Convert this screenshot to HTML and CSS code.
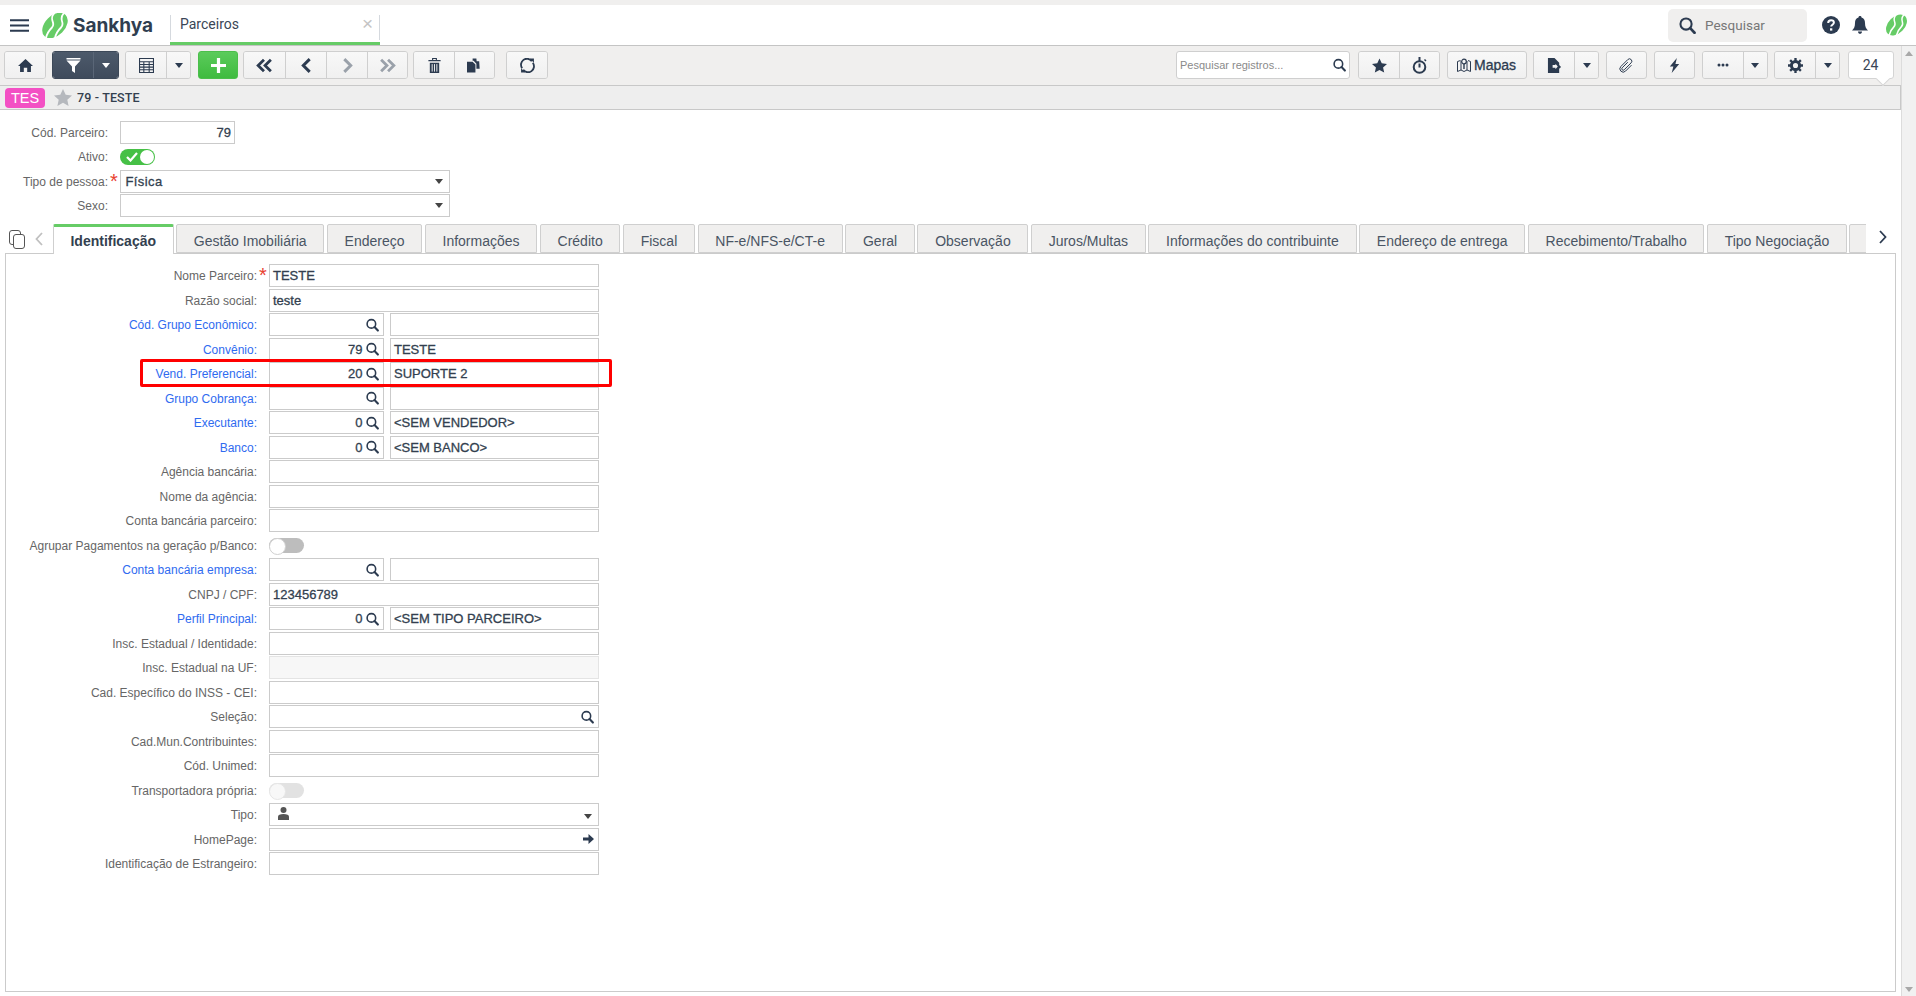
FILE: index.html
```html
<!DOCTYPE html>
<html lang="pt-BR">
<head>
<meta charset="utf-8">
<title>Parceiros - Sankhya</title>
<link rel="stylesheet" href="styles.css">
</head>
<body>
<svg class="sprite" width="0" height="0" aria-hidden="true">
  <symbol id="i-search" viewBox="0 0 14 14"><circle cx="5.8" cy="5.8" r="4.6" fill="none" stroke="currentColor" stroke-width="1.7"/><path d="M9.2 9.2l3.6 3.8" stroke="currentColor" stroke-width="2.2" stroke-linecap="round"/></symbol>
  <symbol id="i-logo" viewBox="0 0 28 25"><g transform="rotate(45 14 12.5)"><ellipse cx="14" cy="12.5" rx="10" ry="15" fill="#66cc66"/></g><path d="M13.500 0C7 7 15.500 9.500 11 14.500 8.500 17 6 20 5 25" fill="none" stroke="#fff" stroke-width="1.800"/><path d="M23 0C16.500 7 25 9.500 20 14.500 17.500 17 15 20 14 25" fill="none" stroke="#fff" stroke-width="1.800"/></symbol>
</svg>

<div class="topstrip"></div>
<header class="appbar">
  <svg class="burger" viewBox="0 0 19 13"><path d="M0 1.200h19M0 6.500h19M0 11.800h19" stroke="#2c3b50" stroke-width="2"/></svg>
  <svg class="logo"><use href="#i-logo"/></svg>
  <span class="brand">Sankhya</span>
  <div class="apptab"><span class="apptab-title">Parceiros</span><span class="apptab-close">×</span></div>
  <div class="appbar-right">
    <div class="global-search"><svg class="gs-icon"><use href="#i-search"/></svg><span>Pesquisar</span></div>
    <svg class="help" viewBox="0 0 18 18"><circle cx="9" cy="9" r="9" fill="#2c3b50"/><path d="M6.200 6.900c0-1.700 1.300-2.700 2.900-2.700 1.700 0 2.800 1 2.800 2.400 0 2.200-2.700 2.100-2.700 4" fill="none" stroke="#fff" stroke-width="2"/><rect x="8" y="12.300" width="2.300" height="2.300" fill="#fff"/></svg>
    <svg class="bell" viewBox="0 0 16 18"><path d="M8 0c1 0 1.500.6 1.500 1.400C12 2 13 4 13 7c0 4 1 5.500 3 7.500H0C2 12.500 3 11 3 7c0-3 1-5 3.500-5.600C6.500.6 7 0 8 0z" fill="#2c3b50"/><path d="M6 15.500h4c0 1.500-1 2.300-2 2.300s-2-.8-2-2.300z" fill="#2c3b50"/></svg>
    <svg class="logo-small"><use href="#i-logo"/></svg>
  </div>
</header>

<div class="workspace">
  <div class="content">
    <div class="toolbar">
      <div class="grp"><button class="btn w40"><svg class="ico" viewBox="0 0 16 14"><path d="M8 0L0 7.500h2.200V14h4v-4.500h3.600V14h4V7.500H16z" fill="#2c3b50"/></svg></button></div>
      <div class="grp dark g6"><button class="btn w40"><svg class="ico" viewBox="0 0 14 15"><path d="M0 0h14v1.500H0zM0 2.500h14L8.500 8.500V15l-3-2V8.500z" fill="#fff"/></svg></button><button class="btn w25"><i class="caret white"></i></button></div>
      <div class="grp g6"><button class="btn w40"><svg class="ico" viewBox="0 0 14 14"><path d="M.5.500h13v13H.5zM.5 3.500h13M.5 6h13M.5 8.500h13M.5 11h13M4.500 3.500v10M9.500 3.500v10" fill="none" stroke="#2c3b50"/></svg></button><button class="btn w24"><i class="caret"></i></button></div>
      <button class="btn add w40 g7"><svg class="ico" viewBox="0 0 14 14"><path d="M5.500 0h3v5.500H14v3H8.500V14h-3V8.500H0v-3h5.500z" fill="#fff"/></svg></button>
      <div class="grp ml5">
        <button class="btn w41"><svg class="ico big" viewBox="0 0 16 14"><path d="M7.500 1.500L2 7l5.500 5.500M14 1.500L8.500 7l5.500 5.500" fill="none" stroke="#2c3b50" stroke-width="2.600"/></svg></button>
        <button class="btn w41"><svg class="ico big" viewBox="0 0 16 14"><path d="M11 1L5 7l6 6" fill="none" stroke="#2c3b50" stroke-width="2.800"/></svg></button>
        <button class="btn w41"><svg class="ico big" viewBox="0 0 16 14"><path d="M5 1l6 6-6 6" fill="none" stroke="#9aa1aa" stroke-width="2.800"/></svg></button>
        <button class="btn w40"><svg class="ico big" viewBox="0 0 16 14"><path d="M2 1.500L7.500 7 2 12.500M8.500 1.500L14 7l-5.500 5.500" fill="none" stroke="#9aa1aa" stroke-width="2.600"/></svg></button>
      </div>
      <div class="grp ml5">
        <button class="btn w40"><svg class="ico" viewBox="0 0 13 16"><path d="M4.500 2.500V.5h4v2" fill="none" stroke="#2c3b50" stroke-width="1.200"/><path d="M0 2h13v1.500H0zM1.500 5h10v11h-10z" fill="#2c3b50"/><path d="M4 6.500v8M6.500 6.500v8M9 6.500v8" stroke="#f3f3f3"/></svg></button>
        <button class="btn w40"><svg class="ico" viewBox="0 0 16 15"><path d="M0 3.500h6L9 6.500V15H0z" fill="#2c3b50"/><path d="M6 0h4l.3 3 2.700 0 .5 8H10V5.500L7 2.500H6z" fill="#2c3b50"/></svg></button>
      </div>
      <div class="grp ml11"><button class="btn w40"><svg class="ico" viewBox="0 0 14 14"><path d="M2 9.500A5.500 5.500 0 0 1 11 3M12 4.500A5.500 5.500 0 0 1 3 11" fill="none" stroke="#2c3b50" stroke-width="1.700"/><path d="M9 .5h4v4zM5 13.500H1v-4z" fill="#2c3b50"/></svg></button></div>

      <div class="toolbar-right">
        <div class="rec-search"><span>Pesquisar registros...</span><svg class="ico-search"><use href="#i-search"/></svg></div>
        <div class="grp ml8">
          <button class="btn w40"><svg class="ico" viewBox="0 0 16 15"><path d="M8 0l2.400 5.200 5.600.6-4.200 3.800 1.200 5.400L8 12.200 3 15l1.200-5.400L0 5.800l5.600-.6z" fill="#2c3b50"/></svg></button>
          <button class="btn w40"><svg class="ico tall" viewBox="0 0 14 17"><circle cx="7" cy="10" r="5.800" fill="none" stroke="#2c3b50" stroke-width="2"/><path d="M7 0v4M7 6.500v4" stroke="#2c3b50" stroke-width="2"/><path d="M12 2.500l1.500 1.500" stroke="#2c3b50" stroke-width="1.500"/></svg></button>
        </div>
        <button class="btn maps ml6"><svg class="map-ico" viewBox="0 0 14 14"><path d="M.5 3.500v10l3.500-1.500 3 1.500 3-1.500 3.500 1.500v-10l-2.500-1M4 3v9M10 3v9M3.500 2.500L.5 3.500" fill="none" stroke="#2c3b50" stroke-width="1"/><circle cx="7" cy="3.500" r="2.300" fill="none" stroke="#2c3b50" stroke-width="1.200"/><path d="M7 6v5" stroke="#2c3b50" stroke-width="1.400"/></svg><span>Mapas</span></button>
        <div class="grp ml6"><button class="btn w40"><svg class="ico" viewBox="0 0 14 16"><path d="M0 0h7l5 5v2.500l2 2-2 2V16H0z" fill="#2c3b50"/><path d="M8 6v1.500h-3v3h3V12l2.500-3z" fill="#f3f3f3"/></svg></button><button class="btn w24"><i class="caret"></i></button></div>
        <button class="btn w41 ml6"><svg class="ico" viewBox="0 0 16 16"><g transform="rotate(45 8 8)"><path d="M6.500 4.500v8.500a1.500 1.500 0 0 0 3 0V2.500a2.500 2.500 0 0 0-5 0V13a3.500 3.500 0 0 0 7 0V4" fill="none" stroke="#2c3b50" stroke-width="1"/></g></svg></button>
        <button class="btn w41 ml7"><svg class="ico" viewBox="0 0 10 16"><path d="M7.500 0L0 9h3.800L2 16l8-9.500H6z" fill="#2c3b50"/></svg></button>
        <div class="grp ml6"><button class="btn w40"><svg class="dots" viewBox="0 0 12 4"><circle cx="2" cy="2" r="1.500" fill="#2c3b50"/><circle cx="6" cy="2" r="1.500" fill="#2c3b50"/><circle cx="10" cy="2" r="1.500" fill="#2c3b50"/></svg></button><button class="btn w24"><i class="caret"></i></button></div>
        <div class="grp ml6"><button class="btn w40"><svg class="ico" viewBox="0 0 14 14"><circle cx="7" cy="7" r="3.800" fill="none" stroke="#2c3b50" stroke-width="2.800"/><path d="M7 0v3M7 11v3M0 7h3M11 7h3M2 2l2 2M10 10l2 2M12 2l-2 2M4 10l-2 2" stroke="#2c3b50" stroke-width="2.200"/></svg></button><button class="btn w24"><i class="caret"></i></button></div>
        <div class="page-size ml7">24</div>
      </div>
    </div>

    <div class="titlebar"><span class="badge">TES</span><svg class="fav" viewBox="0 0 18 17"><path d="M9 0l2.700 5.800 6.300.7-4.700 4.300L14.600 17 9 13.800 3.400 17l1.300-6.200L0 6.500l6.300-.7z" fill="#b5b8bd"/></svg><span class="title-text">79 - TESTE</span></div>

    <form class="headform">
      <div class="row"><label class="lbl-h">Cód. Parceiro:</label><span class="req"></span><div class="field code">79</div></div>
      <div class="row"><label class="lbl-h">Ativo:</label><span class="req"></span><span class="switch on"><svg class="check" viewBox="0 0 12 10"><path d="M1 5l3.500 3.500L11 1" fill="none" stroke="#fff" stroke-width="2.200"/></svg></span></div>
      <div class="row"><label class="lbl-h">Tipo de pessoa:</label><span class="req">*</span><div class="field select hselect"><span>Física</span><i class="caret sel"></i></div></div>
      <div class="row"><label class="lbl-h">Sexo:</label><span class="req"></span><div class="field select hselect"><span></span><i class="caret sel"></i></div></div>
    </form>

    <div class="tabline">
      <svg class="copy" viewBox="0 0 16 19"><rect x=".5" y=".5" width="11" height="14" rx="2.500" fill="none" stroke="#555"/><rect x="4.500" y="4.500" width="11" height="14" rx="2.500" fill="#fff" stroke="#555"/></svg>
      <svg class="tab-prev" viewBox="0 0 8 14"><path d="M7 1L1.500 7 7 13" fill="none" stroke="#c0c0c0" stroke-width="1.800"/></svg>
      <div class="tabs">
        <div class="tab active">Identificação</div>
        <div class="tab">Gestão Imobiliária</div>
        <div class="tab">Endereço</div>
        <div class="tab">Informações</div>
        <div class="tab">Crédito</div>
        <div class="tab">Fiscal</div>
        <div class="tab">NF-e/NFS-e/CT-e</div>
        <div class="tab">Geral</div>
        <div class="tab">Observação</div>
        <div class="tab">Juros/Multas</div>
        <div class="tab">Informações do contribuinte</div>
        <div class="tab">Endereço de entrega</div>
        <div class="tab">Recebimento/Trabalho</div>
        <div class="tab">Tipo Negociação</div>
        <div class="tab tab-more"></div>
      </div>
      <svg class="tab-next" viewBox="0 0 8 14"><path d="M1 1l5.500 6L1 13" fill="none" stroke="#2c3b50" stroke-width="1.800"/></svg>
    </div>

    <section class="panel">
      <div class="row"><label class="lbl">Nome Parceiro:</label><span class="req">*</span><div class="field wide">TESTE</div></div>
      <div class="row"><label class="lbl">Razão social:</label><span class="req"></span><div class="field wide">teste</div></div>
      <div class="row"><label class="lbl link">Cód. Grupo Econômico:</label><span class="req"></span><div class="field lookup"><svg class="ico-search"><use href="#i-search"/></svg></div><div class="field desc"></div></div>
      <div class="row"><label class="lbl link">Convênio:</label><span class="req"></span><div class="field lookup"><span>79</span><svg class="ico-search"><use href="#i-search"/></svg></div><div class="field desc">TESTE</div></div>
      <div class="row marked"><label class="lbl link">Vend. Preferencial:</label><span class="req"></span><div class="field lookup"><span>20</span><svg class="ico-search"><use href="#i-search"/></svg></div><div class="field desc">SUPORTE 2</div><span class="redbox"></span></div>
      <div class="row"><label class="lbl link">Grupo Cobrança:</label><span class="req"></span><div class="field lookup"><svg class="ico-search"><use href="#i-search"/></svg></div><div class="field desc"></div></div>
      <div class="row"><label class="lbl link">Executante:</label><span class="req"></span><div class="field lookup"><span>0</span><svg class="ico-search"><use href="#i-search"/></svg></div><div class="field desc">&lt;SEM VENDEDOR&gt;</div></div>
      <div class="row"><label class="lbl link">Banco:</label><span class="req"></span><div class="field lookup"><span>0</span><svg class="ico-search"><use href="#i-search"/></svg></div><div class="field desc">&lt;SEM BANCO&gt;</div></div>
      <div class="row"><label class="lbl">Agência bancária:</label><span class="req"></span><div class="field wide"></div></div>
      <div class="row"><label class="lbl">Nome da agência:</label><span class="req"></span><div class="field wide"></div></div>
      <div class="row"><label class="lbl">Conta bancária parceiro:</label><span class="req"></span><div class="field wide"></div></div>
      <div class="row"><label class="lbl">Agrupar Pagamentos na geração p/Banco:</label><span class="req"></span><span class="switch off"></span></div>
      <div class="row"><label class="lbl link">Conta bancária empresa:</label><span class="req"></span><div class="field lookup"><svg class="ico-search"><use href="#i-search"/></svg></div><div class="field desc"></div></div>
      <div class="row"><label class="lbl">CNPJ / CPF:</label><span class="req"></span><div class="field wide">123456789</div></div>
      <div class="row"><label class="lbl link">Perfil Principal:</label><span class="req"></span><div class="field lookup"><span>0</span><svg class="ico-search"><use href="#i-search"/></svg></div><div class="field desc">&lt;SEM TIPO PARCEIRO&gt;</div></div>
      <div class="row"><label class="lbl">Insc. Estadual / Identidade:</label><span class="req"></span><div class="field wide"></div></div>
      <div class="row"><label class="lbl">Insc. Estadual na UF:</label><span class="req"></span><div class="field wide disabled"></div></div>
      <div class="row"><label class="lbl">Cad. Específico do INSS - CEI:</label><span class="req"></span><div class="field wide"></div></div>
      <div class="row"><label class="lbl">Seleção:</label><span class="req"></span><div class="field wide trailing"><svg class="ico-search"><use href="#i-search"/></svg></div></div>
      <div class="row"><label class="lbl">Cad.Mun.Contribuintes:</label><span class="req"></span><div class="field wide"></div></div>
      <div class="row"><label class="lbl">Cód. Unimed:</label><span class="req"></span><div class="field wide"></div></div>
      <div class="row"><label class="lbl">Transportadora própria:</label><span class="req"></span><span class="switch off faded"></span></div>
      <div class="row"><label class="lbl">Tipo:</label><span class="req"></span><div class="field wide select"><svg class="person" viewBox="0 0 11 13"><circle cx="5.500" cy="3" r="3" fill="#555"/><path d="M0 13V9.500C0 8 2 7 5.500 7S11 8 11 9.500V13z" fill="#555"/></svg><i class="caret sel low"></i></div></div>
      <div class="row"><label class="lbl">HomePage:</label><span class="req"></span><div class="field wide trailing"><svg class="arrow" viewBox="0 0 11 10"><path d="M0 3.500h5.500V0L11 5 5.500 10V6.500H0z" fill="#2c3b50"/></svg></div></div>
      <div class="row"><label class="lbl">Identificação de Estrangeiro:</label><span class="req"></span><div class="field wide"></div></div>
    </section>
  </div>
  <aside class="scrollbar"><i class="sb-up"></i><i class="sb-down"></i></aside>
</div>
</body>
</html>
```

FILE: styles.css
```css
* { box-sizing: border-box; }
html, body { margin: 0; height: 100%; overflow: hidden; }
body {
  width: 1916px; height: 996px; display: flex; flex-direction: column;
  background: #fff; color: #2c3b50;
  font-family: "Liberation Sans", Arial, sans-serif; font-size: 13px;
}
.sprite { position: absolute; }
.topstrip { height: 5px; background: #f0efee; flex: none; }

/* app bar */
.appbar { height: 41px; flex: none; display: flex; align-items: center; border-bottom: 1px solid #c4c4c4; padding-left: 10px; }
.burger { width: 19px; height: 13px; flex: none; }
.logo { width: 28px; height: 25px; margin-left: 12px; flex: none; }
.brand { font-family: Inter, sans-serif; font-weight: 700; font-size: 19px; color: #2f3e50; margin-left: 4px; width: 97px; flex: none; }
.apptab { width: 210px; height: 40px; flex: none; display: flex; align-items: center; border-bottom: 3px solid #66cc66; position: relative; padding: 0 10px; justify-content: space-between; }
.apptab::before, .apptab::after { content: ""; position: absolute; top: 10px; height: 25px; width: 1px; background: #d5d9de; }
.apptab::before { left: 0; }
.apptab::after { right: 0; }
.apptab-title { font-family: Roboto, sans-serif; font-size: 14px; color: #3a4656; }
.apptab-close { font-size: 19px; color: #c4c4c4; margin-right: -3px; }
.appbar-right { margin-left: auto; display: flex; align-items: center; height: 100%; padding-right: 8px; }
.global-search { width: 139px; height: 33px; background: #f0efee; border-radius: 5px; display: flex; align-items: center; padding-left: 11px; gap: 9px; color: #777; font-family: Roboto, sans-serif; font-size: 13.500px; }
.gs-icon { width: 17px; height: 17px; color: #2c3b50; }
.help { width: 18px; height: 18px; margin-left: 15px; }
.bell { width: 16px; height: 18px; margin-left: 12px; }
.logo-small { width: 23px; height: 22px; margin-left: 17px; }

/* workspace */
.workspace { flex: 1; display: flex; min-height: 0; }
.content { width: 1901px; display: flex; flex-direction: column; }
.scrollbar { width: 15px; background: #f1f1f1; border-left: 1px solid #dcdcdc; position: relative; }
.sb-up, .sb-down { position: absolute; left: 3px; width: 0; height: 0; border-left: 4px solid transparent; border-right: 4px solid transparent; }
.sb-up { top: 5px; border-bottom: 5px solid #a8a8a8; }
.sb-down { bottom: 4px; border-top: 5px solid #a8a8a8; }

/* toolbar */
.toolbar { height: 39px; flex: none; background: #f0efee; display: flex; align-items: flex-start; padding: 5px 7.500px 0 4px; }
.toolbar-right { margin-left: auto; display: flex; align-items: flex-start; }
.grp { display: flex; height: 28px; border: 1px solid #cfcfcf; border-radius: 3px; overflow: hidden; flex: none; }
.btn { height: 28px; padding: 0; border: 0; display: flex; align-items: center; justify-content: center; background: linear-gradient(#f8f8f8, #f0f0f0); flex: none; cursor: pointer; color: #2c3b50; font-family: inherit; }
.grp .btn { height: 26px; }
.grp .btn + .btn { border-left: 1px solid #cfcfcf; }
.toolbar > .btn, .toolbar-right > .btn { border: 1px solid #cfcfcf; border-radius: 3px; }
.dark { border-color: #3c4858; }
.dark .btn { background: linear-gradient(#4d5a6b, #3f4b5c); }
.grp.dark .btn + .btn { border-left-color: #5a6677; }
.btn.add { background: linear-gradient(#5bcb5b, #3fbb3f); border-color: #4bbf4b; }
.w24 { width: 24px; } .w25 { width: 25px; } .w40 { width: 40px; } .w41 { width: 41px; }
.g6 { margin-left: 6px; } .g7 { margin-left: 7px; }
.ml5 { margin-left: 5px; } .ml6 { margin-left: 6.500px; } .ml7 { margin-left: 7.500px; } .ml8 { margin-left: 8px; } .ml11 { margin-left: 11px; }
.ico { width: 15px; height: 15px; }
.ico.big { width: 17px; }
.ico.tall { height: 17px; }
.dots { width: 12px; height: 4px; }
.caret { display: block; width: 0; height: 0; border-left: 4.500px solid transparent; border-right: 4.500px solid transparent; border-top: 5px solid #2c3b50; }
.caret.white { border-top-color: #fff; }
.rec-search { width: 174px; height: 28px; background: #fff; border: 1px solid #cfcfcf; border-radius: 3px; display: flex; align-items: center; justify-content: space-between; padding: 0 3px 0 3px; color: #8a8a8a; font-size: 11px; flex: none; }
.ico-search { width: 13px; height: 14px; color: #2c3b50; flex: none; }
.maps { width: 80px; gap: 3px; font-size: 14px; color: #2c3b50; -webkit-text-stroke: .3px #2c3b50; }
.map-ico { width: 14px; height: 14px; }
.page-size { width: 46px; height: 28px; background: #fff; border: 1px solid #d4d4d4; border-radius: 3px; display: flex; align-items: center; justify-content: center; font-family: Roboto, sans-serif; font-size: 14px; color: #3a4656; position: relative; flex: none; }
.page-size::after { content: ""; position: absolute; left: 29px; top: 22px; width: 9px; height: 9px; background: #fff; border-right: 1px solid #d4d4d4; border-bottom: 1px solid #d4d4d4; transform: rotate(45deg); }

/* title bar */
.titlebar { height: 25px; flex: none; background: #eee; border-top: 1px solid #c8c8c8; border-bottom: 1px solid #c8c8c8; border-right: 1px solid #c8c8c8; display: flex; align-items: center; padding-left: 5px; }
.badge { width: 40px; height: 20px; border-radius: 4px; background: #f350c4; color: #fff; font-size: 14.500px; display: flex; align-items: center; justify-content: center; }
.fav { width: 18px; height: 17px; margin-left: 9px; }
.title-text { font-family: Roboto, sans-serif; font-weight: 500; font-size: 12.500px; margin-left: 5px; letter-spacing: .15px; color: #333f4f; }

/* forms */
.headform { flex: none; padding-top: 10.500px; }
.row { display: flex; height: 24.500px; align-items: flex-start; position: relative; }
.lbl-h, .lbl { text-align: right; line-height: 25px; font-size: 12px; color: #666; flex: none; }
.lbl-h { width: 108px; }
.lbl { width: 251px; }
.link { color: #2f6bf0; }
.req { width: 12px; flex: none; color: #e8402f; font-size: 20px; line-height: 23px; padding-left: 2px; }
.lbl + .req { width: 11.500px; }
.field { height: 23px; flex: none; border: 1px solid #cbcbcb; background: #fff; padding: 0 3.500px; line-height: 21px; font-size: 13px; color: #333f4f; -webkit-text-stroke: .3px #333f4f; white-space: nowrap; }
.code { width: 115px; text-align: right; padding-right: 3px; }
.hselect { width: 330px; letter-spacing: .4px; padding-left: 4.500px; }
.select { display: flex; align-items: center; justify-content: space-between; }
.caret.sel { margin-right: 3px; border-top-color: #444; }
.wide .caret.sel { margin-right: 2px; }
.caret.low { margin-top: 3px; }
.wide { width: 330px; }
.lookup { width: 115px; display: flex; justify-content: flex-end; align-items: center; gap: 3px; padding-right: 4px; }
.desc { width: 209px; margin-left: 6px; }
.disabled { background: #f7f7f7; border-color: #e4e4e4; }
.trailing { display: flex; align-items: center; justify-content: flex-end; }
.person { width: 11px; height: 13px; margin: -3px 0 0 5px; }
.arrow { width: 11px; height: 10px; }
.switch { width: 35px; height: 15px; border-radius: 8px; margin-top: 4px; position: relative; flex: none; }
.switch.on { background: #46c046; height: 16px; margin-top: 4px; }
.switch.on::after { content: ""; position: absolute; right: 1px; top: 1px; width: 14px; height: 14px; border-radius: 50%; background: #fff; }
.check { position: absolute; left: 6px; top: 3px; width: 12px; height: 10px; }
.switch.off { background: #bdbdbd; }
.switch.off::after { content: ""; position: absolute; left: 0; top: 0; width: 15px; height: 15px; border-radius: 50%; background: #fff; border: 1px solid #d0d0d0; }
.switch.faded { background: #e2e2e2; }
.switch.faded::after { background: #f8f8f8; border-color: #e6e6e6; }
.redbox { position: absolute; left: 134px; top: -3px; width: 472px; height: 28px; border: 3px solid #f00; border-radius: 2px; }

/* tabs */
.tabline { height: 29px; flex: none; margin-top: 5.500px; display: flex; align-items: flex-start; position: relative; z-index: 1; }
.copy { width: 16px; height: 19px; margin: 6px 0 0 9px; flex: none; }
.tab-prev { width: 8px; height: 14px; margin: 8px 0 0 10px; flex: none; }
.tabs { display: flex; gap: 2.500px; margin-left: 10px; width: 1813px; overflow: hidden; height: 30px; flex: none; }
.tab { height: 29px; flex: none; padding: 0 16.750px; background: #f0efee; border: 1px solid #cfcfcf; border-radius: 2px 2px 0 0; font-size: 14px; line-height: 32px; color: #4a5564; white-space: nowrap; }
.tab.active { width: 120.500px; padding: 0; text-align: center; height: 30px; background: #fff; border: 1px solid #cfcfcf; border-top: 3px solid #66cc66; border-bottom: 0; font-weight: 700; color: #333f4f; line-height: 28px; position: relative; z-index: 2; }
.tab-more { width: 40px; }
.tab-next { width: 8px; height: 14px; margin: 6px 0 0 13px; flex: none; }
.panel { height: 739px; flex: none; width: 1891px; margin-left: 5px; border: 1px solid #cbcbcb; padding-top: 10px; }
```
